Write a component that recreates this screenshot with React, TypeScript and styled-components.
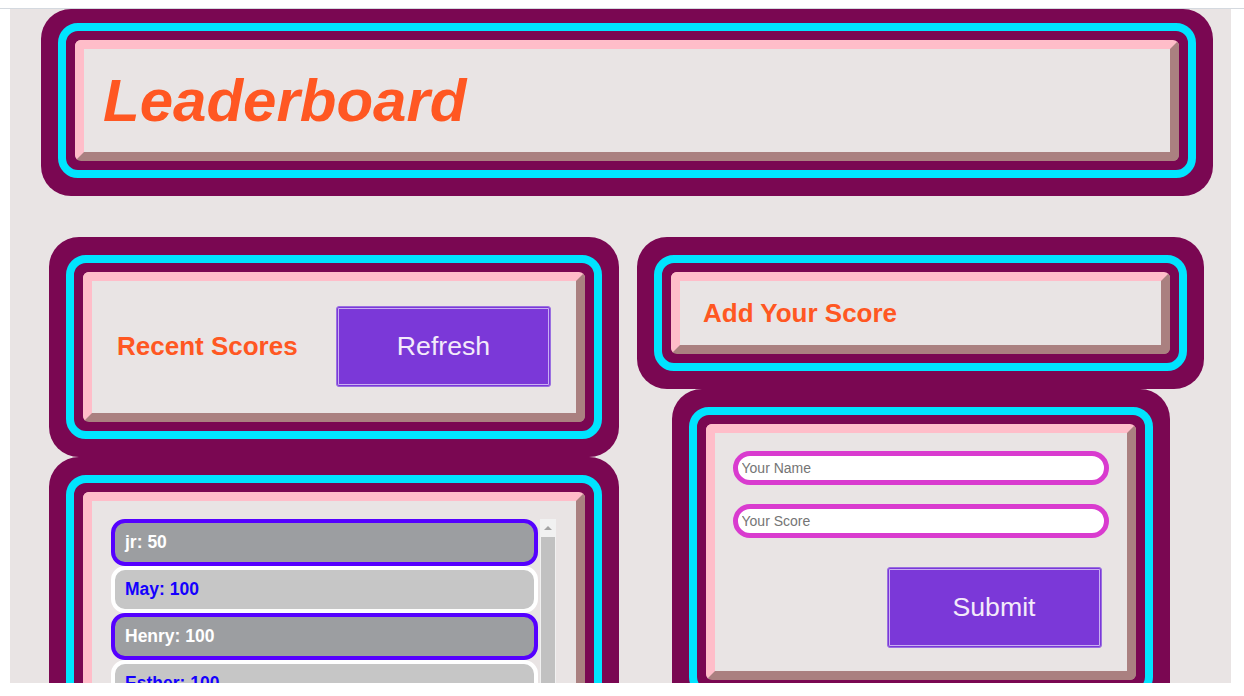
import styled, { createGlobalStyle } from 'styled-components';

const GlobalStyle = createGlobalStyle`
  html, body {
    margin: 0;
    background: #ffffff;
  }
  body {
    font-family: 'Liberation Sans', Arial, sans-serif;
  }
  * {
    box-sizing: border-box;
  }
`;

const Viewport = styled.div`
  margin-top: 8px;
  border-top: 1px solid #d4d9df;
`;

const Page = styled.main`
  width: 1221px;
  height: 674px;
  margin-left: 10px;
  background: #e9e4e4;
  overflow: hidden;
`;

// three nested frames: purple shell, cyan ring, bevelled pink card
const Shell = styled.section<{ $width: number }>`
  width: ${(p) => p.$width}px;
  padding: 18px 17px;
  background: #7a0752;
  border-radius: 30px;
`;

const Ring = styled.div`
  border: 8px solid #00e4ff;
  border-radius: 20px;
  padding: 9px;
`;

const Card = styled.div`
  border: 9px solid;
  border-color: #ffbdc9 #aa8080 #aa8080 #ffbdc9;
  border-radius: 6px;
  background: #e9e4e4;
`;

const TitleShell = styled(Shell)`
  margin-left: 31px;
  padding-top: 14px;
`;

const Title = styled.h1`
  margin: 0;
  height: 103px;
  display: flex;
  align-items: center;
  padding-left: 19px;
  font-size: 60px;
  font-weight: 700;
  font-style: italic;
  color: #ff5722;
`;

const Columns = styled.div`
  display: flex;
  align-items: flex-start;
  gap: 18px;
  margin-top: 41px;
  padding-left: 39px;
`;

const LeftColumn = styled.div`
  display: flex;
  flex-direction: column;
  width: 570px;
`;

const RightColumn = styled.div`
  display: flex;
  flex-direction: column;
  align-items: center;
  width: 567px;
`;

const HeaderRow = styled.div`
  display: flex;
  align-items: center;
  justify-content: space-between;
  padding: 25px 25px 26px;
`;

const HeadingBar = styled.div`
  height: 64px;
  display: flex;
  align-items: center;
  padding-left: 23px;
`;

const Heading = styled.h2`
  margin: 0;
  font-size: 26px;
  font-weight: 700;
  color: #ff5722;
`;

const ActionButton = styled.button`
  width: 215px;
  height: 81px;
  padding: 0;
  border: 1px solid #9a6fe0;
  border-radius: 3px;
  background: #7b38d8;
  box-shadow: inset 0 0 0 1px #7b38d8, inset 0 0 0 2px #c9b0f2;
  color: #f3eafa;
  font-family: 'Liberation Sans', Arial, sans-serif;
  font-size: 26.67px;
  cursor: pointer;
`;

const Form = styled.form`
  display: flex;
  flex-direction: column;
  padding: 18px 18px 23px;
`;

const Field = styled.input`
  height: 34px;
  padding: 0 4px;
  border: 5px solid #d93bcf;
  border-radius: 17px;
  background: #ffffff;
  font-family: 'Liberation Sans', Arial, sans-serif;
  font-size: 14px;
  outline: none;

  & + & {
    margin-top: 19px;
  }

  &::placeholder {
    color: #757575;
  }
`;

const SubmitButton = styled(ActionButton)`
  align-self: flex-end;
  margin: 29px 7px 0 0;
`;

const ListBody = styled.div`
  display: flex;
  gap: 2px;
  padding: 18px 20px 19px 19px;
`;

const ScoreList = styled.ul`
  flex: 1;
  margin: 0;
  padding: 0;
  list-style: none;
`;

const ScoreItem = styled.li<{ $active: boolean }>`
  padding: 9px 10px;
  border: 4px solid ${(p) => (p.$active ? '#5500ff' : '#ffffff')};
  border-radius: 14px;
  background: ${(p) => (p.$active ? '#9c9ea1' : '#c6c6c6')};
  color: ${(p) => (p.$active ? '#ffffff' : '#1400ff')};
  font-size: 17.5px;
  font-weight: 700;
  line-height: 21px;
`;

const ScrollTrack = styled.div`
  width: 16px;
  display: flex;
  flex-direction: column;
  align-items: center;
  background: #f1f1f1;
`;

const ScrollArrow = styled.div`
  width: 100%;
  height: 18px;
  display: flex;
  align-items: center;
  justify-content: center;

  &::before {
    content: '';
    border-left: 4px solid transparent;
    border-right: 4px solid transparent;
    border-bottom: 4px solid #a3a3a3;
  }
`;

const ScrollThumb = styled.div`
  width: 14px;
  height: 220px;
  background: #c1c1c1;
`;

const scores = [
  { name: 'jr', score: 50 },
  { name: 'May', score: 100 },
  { name: 'Henry', score: 100 },
  { name: 'Esther', score: 100 },
];

export default function App() {
  return (
    <>
      <GlobalStyle />
      <Viewport>
        <Page>
          <TitleShell $width={1172}>
            <Ring>
              <Card>
                <Title>Leaderboard</Title>
              </Card>
            </Ring>
          </TitleShell>
          <Columns>
            <LeftColumn>
              <Shell $width={570}>
                <Ring>
                  <Card>
                    <HeaderRow>
                      <Heading>Recent Scores</Heading>
                      <ActionButton type="button">Refresh</ActionButton>
                    </HeaderRow>
                  </Card>
                </Ring>
              </Shell>
              <Shell $width={570}>
                <Ring>
                  <Card>
                    <ListBody>
                      <ScoreList>
                        {scores.map((s, i) => (
                          <ScoreItem key={s.name} $active={i % 2 === 0}>
                            {s.name}: {s.score}
                          </ScoreItem>
                        ))}
                      </ScoreList>
                      <ScrollTrack>
                        <ScrollArrow />
                        <ScrollThumb />
                      </ScrollTrack>
                    </ListBody>
                  </Card>
                </Ring>
              </Shell>
            </LeftColumn>
            <RightColumn>
              <Shell $width={567}>
                <Ring>
                  <Card>
                    <HeadingBar>
                      <Heading>Add Your Score</Heading>
                    </HeadingBar>
                  </Card>
                </Ring>
              </Shell>
              <Shell $width={498}>
                <Ring>
                  <Card>
                    <Form onSubmit={(e) => e.preventDefault()}>
                      <Field placeholder="Your Name" />
                      <Field placeholder="Your Score" />
                      <SubmitButton type="submit">Submit</SubmitButton>
                    </Form>
                  </Card>
                </Ring>
              </Shell>
            </RightColumn>
          </Columns>
        </Page>
      </Viewport>
    </>
  );
}
